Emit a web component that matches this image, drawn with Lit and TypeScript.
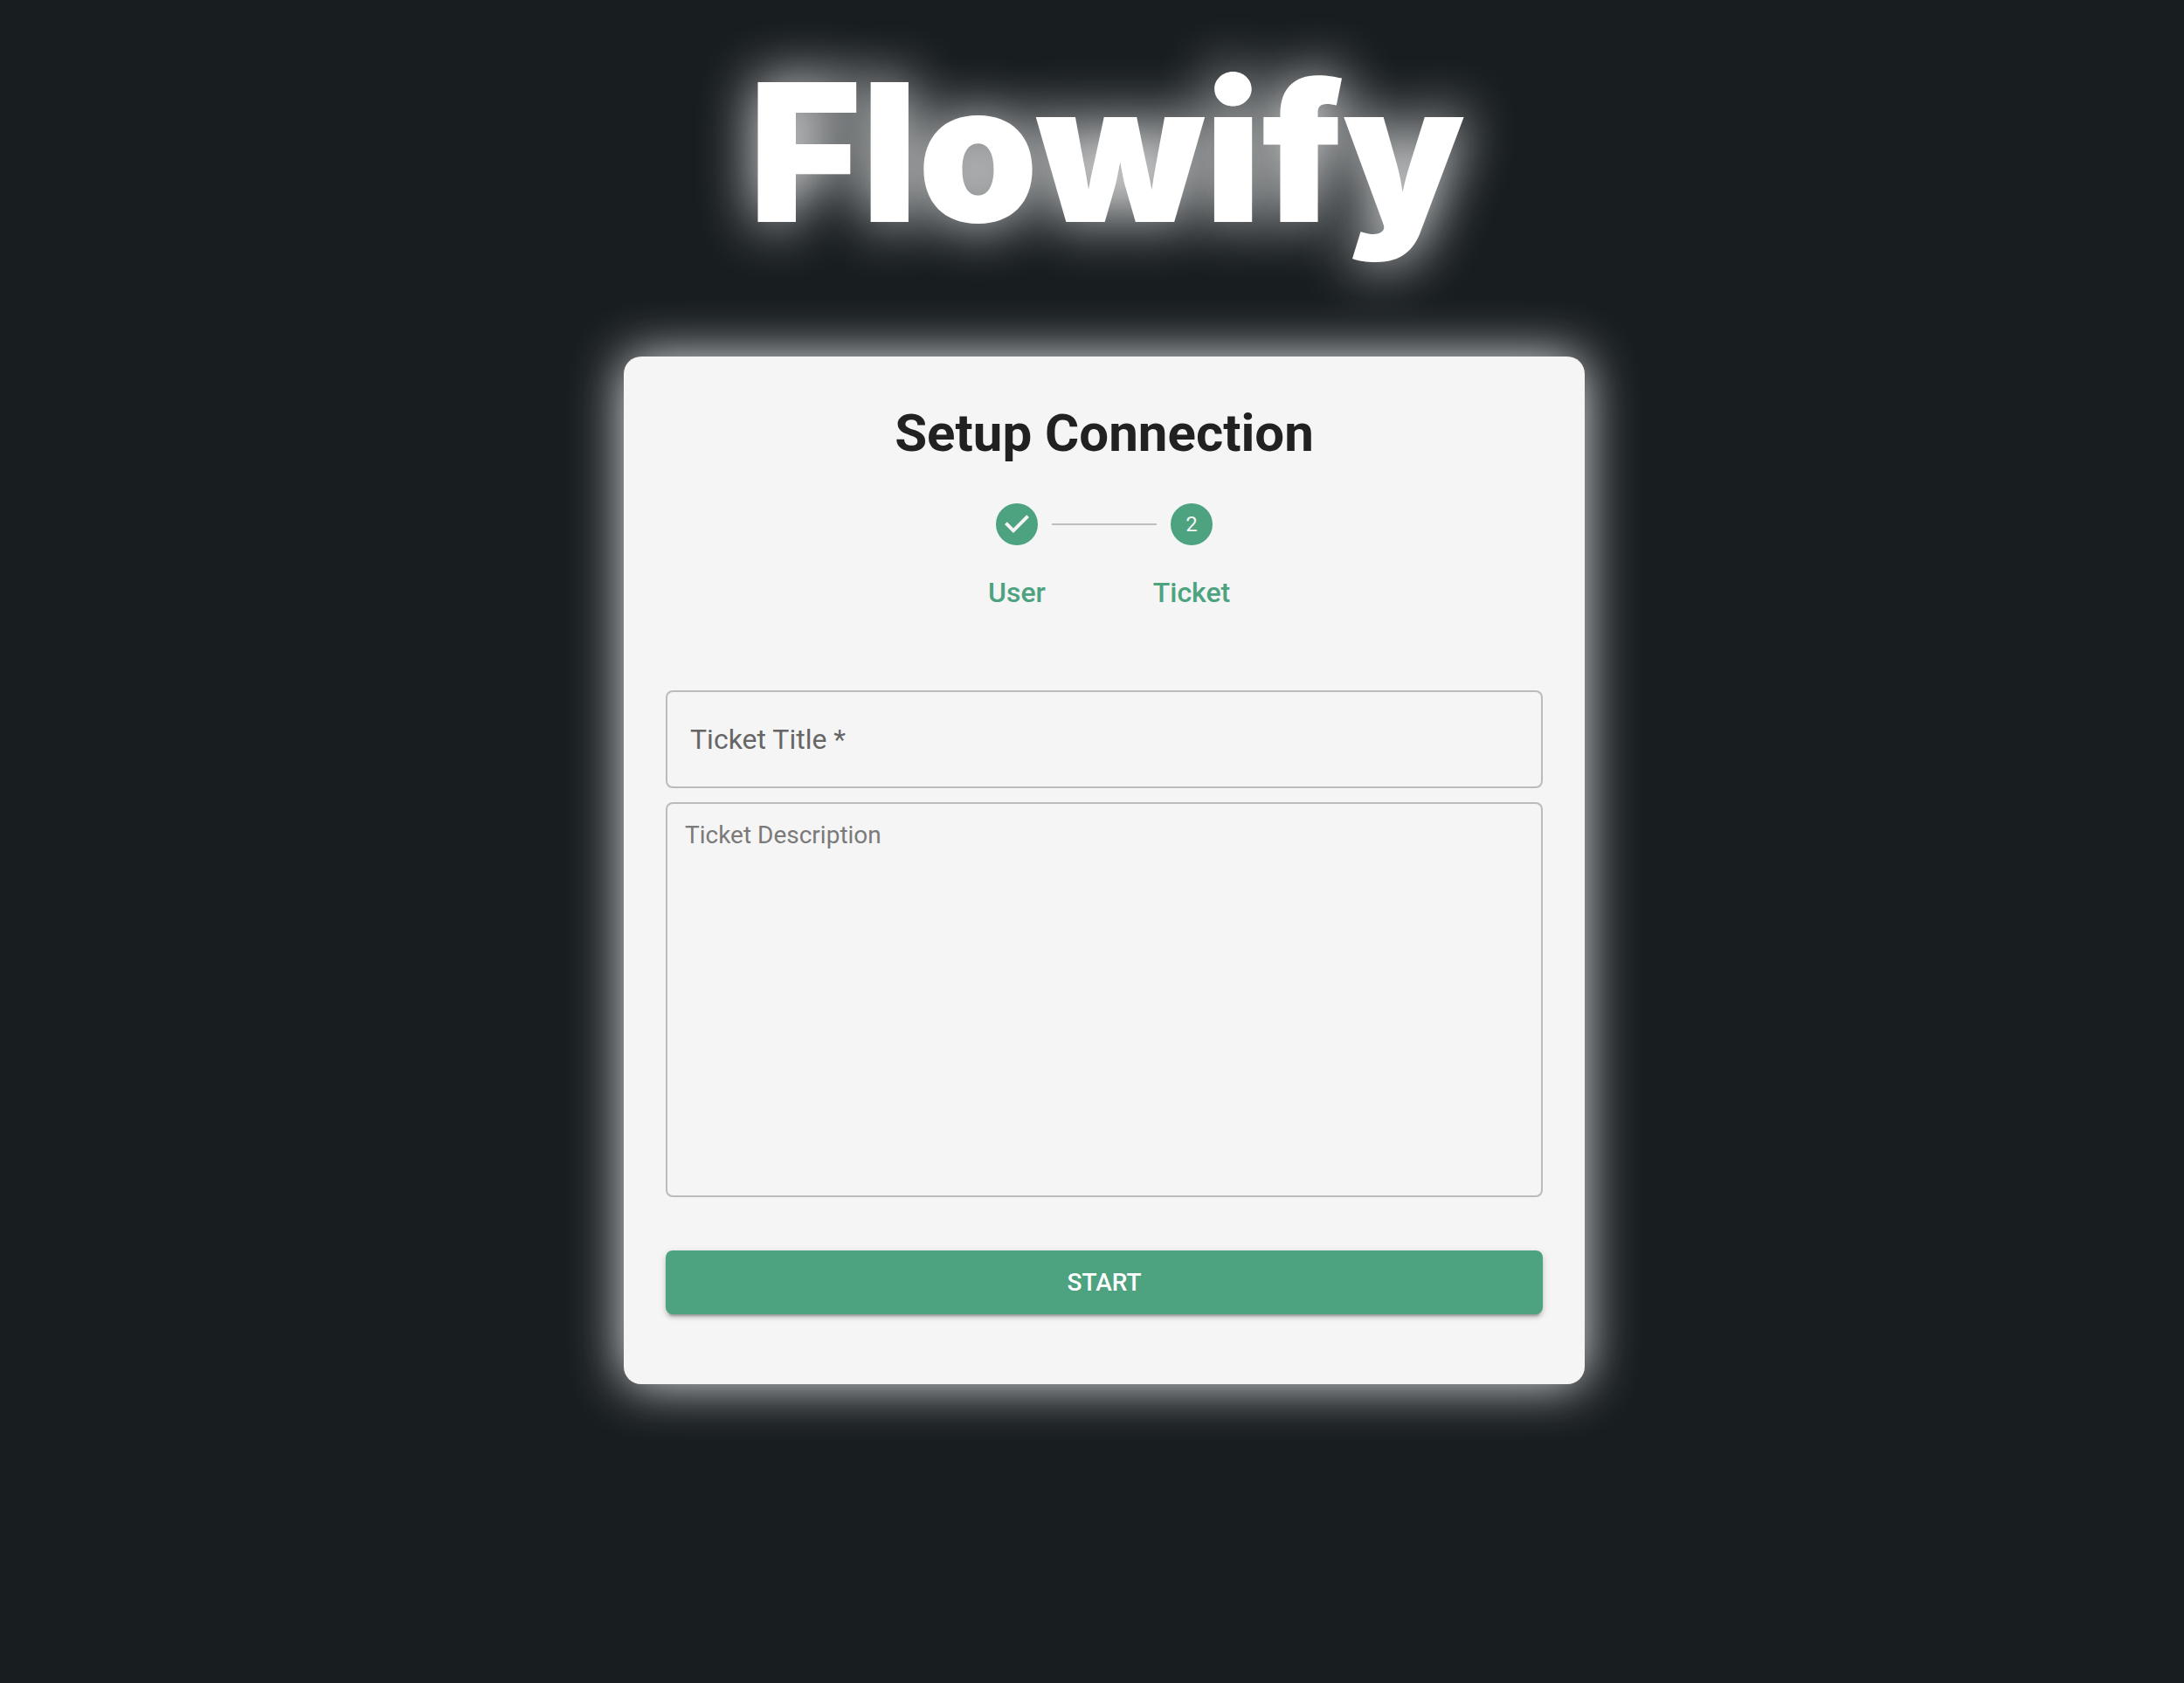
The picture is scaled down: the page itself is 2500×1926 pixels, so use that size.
import { LitElement, html, css } from "lit";
import { customElement, state } from "lit/decorators.js";

interface Step {
  label: string;
  done: boolean;
}

@customElement("app-root")
export class AppRoot extends LitElement {
  static styles = css`
    :host {
      display: block;
      font-family: Roboto, "Liberation Sans", sans-serif;
      color: #212121;
    }
    * {
      box-sizing: border-box;
    }
    .page {
      min-height: 100vh;
      padding: 32px 0 64px 28px;
      display: flex;
      flex-direction: column;
      align-items: center;
      background: #181d20;
    }
    .brand {
      margin: 0 0 92px;
      padding-left: 6px;
      font-family: Inter, Roboto, sans-serif;
      font-size: 220px;
      line-height: 284px;
      font-weight: 900;
      color: #fff;
      text-shadow: 0 0 64px rgba(255, 255, 255, 0.96);
    }
    .card {
      width: 100%;
      max-width: 1100px;
      padding: 48px 48px 80px;
      display: flex;
      flex-direction: column;
      border-radius: 20px;
      background: #f5f5f5;
      box-shadow: 0 0 60px rgba(255, 255, 255, 0.9);
    }
    .title {
      margin: 0 0 40px;
      font-size: 60px;
      line-height: 80px;
      font-weight: 700;
      text-align: center;
    }
    .steps {
      margin: 0 0 90px;
      padding: 0;
      display: flex;
      justify-content: center;
      list-style: none;
    }
    .step {
      width: 200px;
      display: grid;
      grid-template-columns: 1fr 48px 1fr;
      align-items: center;
      row-gap: 32px;
      color: #4da280;
    }
    .step::before,
    .step::after {
      content: "";
      height: 2px;
    }
    .step:not(:last-child)::after {
      margin-left: 16px;
      background: #bdbdbd;
    }
    .step:not(:first-child)::before {
      margin-right: 16px;
      background: #bdbdbd;
    }
    .step::before {
      order: 1;
    }
    .icon {
      order: 2;
      display: block;
      width: 48px;
      height: 48px;
    }
    .step::after {
      order: 3;
    }
    .step-label {
      order: 4;
      grid-column: 1 / -1;
      font-size: 32px;
      line-height: 44px;
      font-weight: 500;
      text-align: center;
    }
    .number {
      font-size: 12px;
      fill: #f5f5f5;
      text-anchor: middle;
      dominant-baseline: central;
    }
    .form {
      display: flex;
      flex-direction: column;
      gap: 16px;
    }
    .field {
      display: grid;
      align-items: center;
    }
    .field > * {
      grid-area: 1 / 1;
    }
    .field-label {
      padding: 0 28px;
      font-size: 32px;
      line-height: 44px;
      color: #666;
      pointer-events: none;
    }
    .filled .field-label,
    .field:focus-within .field-label {
      visibility: hidden;
    }
    .input,
    .textarea {
      display: block;
      width: 100%;
      margin: 0;
      border: 2px solid #bbb;
      border-radius: 8px;
      background: transparent;
      color: inherit;
      font-family: inherit;
      outline: none;
    }
    .input {
      height: 112px;
      padding: 0 26px;
      font-size: 32px;
    }
    .textarea {
      height: 452px;
      padding: 20px;
      font-size: 28px;
      line-height: 32px;
      resize: none;
    }
    .textarea::placeholder {
      color: #7a7a7a;
      opacity: 1;
    }
    .input:focus,
    .textarea:focus {
      border-color: #4da280;
    }
    .submit {
      margin: 45px 0 0;
      padding: 12px 32px;
      border: 0;
      border-radius: 8px;
      background: #4da280;
      color: #fff;
      font-family: inherit;
      font-size: 28px;
      line-height: 49px;
      font-weight: 500;
      text-transform: uppercase;
      cursor: pointer;
      box-shadow:
        0 6px 2px -4px rgba(0, 0, 0, 0.2),
        0 4px 4px rgba(0, 0, 0, 0.14),
        0 2px 10px rgba(0, 0, 0, 0.12);
    }
  `;

  @state() private ticketTitle = "";

  private steps: Step[] = [
    { label: "User", done: true },
    { label: "Ticket", done: false },
  ];

  private onTitle(e: Event) {
    this.ticketTitle = (e.target as HTMLInputElement).value;
  }

  private renderIcon(step: Step, index: number) {
    return step.done
      ? html`<svg class="icon" viewBox="0 0 24 24" fill="currentColor" aria-hidden="true">
          <path d="M12 0a12 12 0 1 0 0 24 12 12 0 0 0 0-24zm-2 17l-5-5 1.4-1.4 3.6 3.6 7.6-7.6L19 8l-9 9z" />
        </svg>`
      : html`<svg class="icon" viewBox="0 0 24 24" fill="currentColor">
          <circle cx="12" cy="12" r="12" />
          <text class="number" x="12" y="12">${index + 1}</text>
        </svg>`;
  }

  render() {
    return html`
      <main class="page">
        <h1 class="brand">Flowify</h1>
        <section class="card">
          <h2 class="title">Setup Connection</h2>
          <ol class="steps">
            ${this.steps.map(
              (step, i) => html`<li class="step">
                ${this.renderIcon(step, i)}
                <span class="step-label">${step.label}</span>
              </li>`
            )}
          </ol>
          <form class="form" @submit=${(e: Event) => e.preventDefault()}>
            <div class="field ${this.ticketTitle ? "filled" : ""}">
              <input class="input" id="ticket-title" type="text" required @input=${this.onTitle} />
              <label class="field-label" for="ticket-title">Ticket Title *</label>
            </div>
            <textarea class="textarea" aria-label="Ticket Description" placeholder="Ticket Description"></textarea>
            <button class="submit" type="submit">Start</button>
          </form>
        </section>
      </main>
    `;
  }
}
